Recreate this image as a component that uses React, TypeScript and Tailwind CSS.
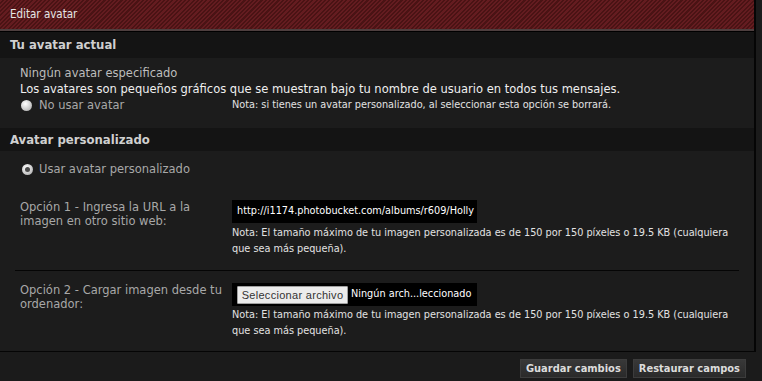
import React from 'react';

function Radio({ checked }: { checked?: boolean }) {
  return (
    <span className="inline-flex h-[11px] w-[11px] shrink-0 items-center justify-center rounded-full bg-[radial-gradient(circle_at_40%_35%,#ffffff,#c8c8c8_60%,#9a9a9a)]">
      {checked && <span className="h-[5px] w-[5px] rounded-full bg-[#4a4a4a]" />}
    </span>
  );
}

function SectionHead({ title, h }: { title: string; h: string }) {
  return (
    <div className={`${h} flex items-center bg-[#141414] pl-[10px] font-['DejaVu_Sans_Condensed','DejaVu_Sans',sans-serif] text-[13px] font-bold text-[#cfcfcf]`}>
      {title}
    </div>
  );
}

const sizeNote =
  'Nota: El tamaño máximo de tu imagen personalizada es de 150 por 150 píxeles o 19.5 KB (cualquiera que sea más pequeña).';

// Tahoma-ish small text
const narrow = "font-['DejaVu_Sans_Condensed','DejaVu_Sans',sans-serif]";

export default function App() {
  return (
    <div className="h-[381px] w-[762px] overflow-hidden bg-[#1b1b1b] font-['DejaVu_Sans',sans-serif]">
      <div className="w-[756px] border-r-2 border-b border-[#050505] bg-[#1c1c1c]">
        {/* Title bar */}
        <div className={`flex h-[29px] items-center bg-[repeating-linear-gradient(135deg,#641c20_0px,#641c20_1.5px,#4a1314_1.5px,#4a1314_3px)] pl-[10px] text-[11.5px] text-[#e6e6e6] ${narrow}`}>
          Editar avatar
        </div>
        <div className="h-[2px] bg-[#4e3f3f]" />
        <div className="h-px bg-black" />

        <SectionHead title="Tu avatar actual" h="h-[26px]" />
        <div className="pl-[20px] pt-[7px] pb-[15px] text-[11.5px] leading-[16px]">
          <div className="text-[#bdbdbd]">Ningún avatar especificado</div>
          <div className="text-[#efefef]">
            Los avatares son pequeños gráficos que se muestran bajo tu nombre de usuario en todos tus mensajes.
          </div>
          <div className="flex items-center">
            <label className="flex w-[212px] items-center gap-[7px] pl-px text-[#a8a8a8]">
              <Radio />
              No usar avatar
            </label>
            <span className={`text-[10.8px] text-[#e2e2e2] ${narrow}`}>
              Nota: si tienes un avatar personalizado, al seleccionar esta opción se borrará.
            </span>
          </div>
        </div>

        <SectionHead title="Avatar personalizado" h="h-[23px]" />
        <div className="pt-[10px] text-[11.5px]">
          <label className="flex h-[16px] items-center gap-[6px] pl-[22px] leading-[16px] text-[#a8a8a8]">
            <Radio checked />
            Usar avatar personalizado
          </label>

          <div className="mx-[15px] mt-[23px] flex border-b border-[#050505] pb-[13px]">
            <div className="w-[217px] pl-[5px] pr-[10px] leading-[14px] text-[#a8a8a8]">
              Opción 1 - Ingresa la URL a la imagen en otro sitio web:
            </div>
            <div className="flex-1">
              <div className={`flex h-[23px] w-[245px] items-center overflow-hidden bg-black px-[5px] text-[10.8px] whitespace-nowrap text-white ${narrow}`}>
                http://i1174.photobucket.com/albums/r609/Holly
              </div>
              <p className={`mt-[2px] w-[500px] text-[10.8px] leading-[16px] text-[#e2e2e2] ${narrow}`}>{sizeNote}</p>
            </div>
          </div>

          <div className="mx-[15px] mt-[12px] flex pb-[12px]">
            <div className="w-[217px] pl-[5px] pr-[10px] leading-[14px] text-[#a8a8a8]">
              Opción 2 - Cargar imagen desde tu ordenador:
            </div>
            <div className="flex-1">
              <div className={`flex h-[23px] w-[245px] items-center bg-black pl-[5px] text-[10.8px] text-white ${narrow}`}>
                <button className="h-[18px] w-[111px] shrink-0 rounded-[1px] border border-[#a0a0a0] bg-[#ececec] font-['Liberation_Sans',sans-serif] text-[11px] leading-[16px] tracking-[0.3px] whitespace-nowrap text-[#333]">
                  Seleccionar archivo
                </button>
                <span className="ml-[3px] whitespace-nowrap">Ningún arch...leccionado</span>
              </div>
              <p className={`mt-[1px] w-[500px] text-[10.8px] leading-[16px] text-[#e2e2e2] ${narrow}`}>{sizeNote}</p>
            </div>
          </div>
        </div>
      </div>

      <div className={`flex justify-end gap-[6px] pt-[7px] pr-[16px] ${narrow}`}>
        <button className="h-[19px] border border-[#3c3c3c] bg-[linear-gradient(#383838,#2a2a2a)] px-[5px] text-[11px] font-bold leading-[17px] text-[#dcdcdc]">
          Guardar cambios
        </button>
        <button className="h-[19px] border border-[#3c3c3c] bg-[linear-gradient(#383838,#2a2a2a)] px-[5px] text-[11px] font-bold leading-[17px] text-[#dcdcdc]">
          Restaurar campos
        </button>
      </div>
    </div>
  );
}
